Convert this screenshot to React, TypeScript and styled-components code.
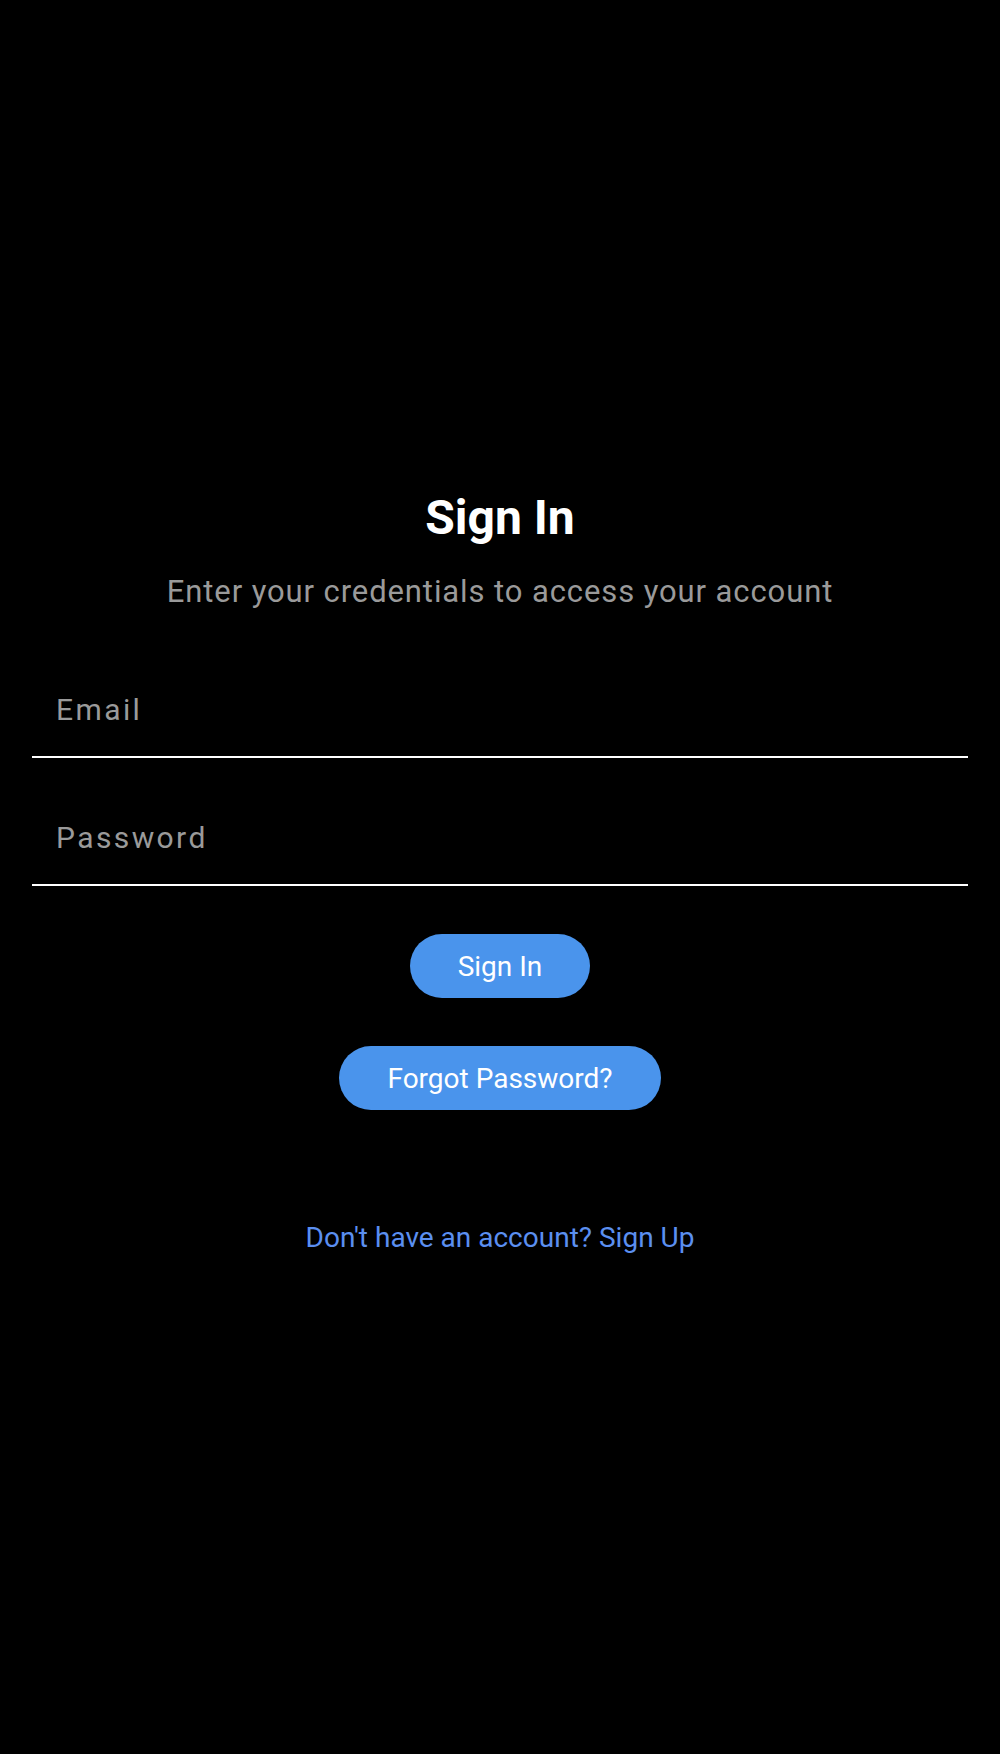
import React from "react";
import styled, { createGlobalStyle } from "styled-components";

const GlobalStyle = createGlobalStyle`
  html, body {
    margin: 0;
    padding: 0;
    background: #000;
  }
  body {
    font-family: Roboto, "Noto Sans", "Liberation Sans", sans-serif;
    color: #fff;
  }
  * { box-sizing: border-box; }
`;

const Screen = styled.main`
  min-height: 100vh;
  display: flex;
  flex-direction: column;
  justify-content: center;
  align-items: stretch;
  padding: 0 32px;
  background: #000;
`;

const Title = styled.h1`
  margin: 0;
  font-size: 48px;
  font-weight: 700;
  line-height: 56px;
  text-align: center;
  color: #fff;
`;

const Subtitle = styled.p`
  margin: 28px 0 0;
  font-size: 31px;
  line-height: 36px;
  letter-spacing: 0.9px;
  text-align: center;
  color: #9a9a9a;
`;

const Form = styled.form`
  display: flex;
  flex-direction: column;
  align-items: center;
  margin-top: 52px;
`;

const Field = styled.input<{ $gap?: number }>`
  width: 100%;
  height: 96px;
  margin: ${(p) => p.$gap ?? 0}px 0 0;
  padding: 0 24px;
  background: transparent;
  border: none;
  border-bottom: 2px solid #fff;
  border-radius: 0;
  outline: none;
  font-family: inherit;
  font-size: 30px;
  letter-spacing: 2.4px;
  color: #fff;

  &::placeholder {
    color: #9a9a9a;
    opacity: 1;
  }
`;

const PillButton = styled.button<{ $gap: number }>`
  margin-top: ${(p) => p.$gap}px;
  height: 64px;
  padding: 0 48px;
  border: none;
  border-radius: 32px;
  background: #4a94ec;
  color: #fff;
  font-family: inherit;
  font-size: 28px;
  line-height: 33px;
  cursor: pointer;
`;

const LinkButton = styled.button`
  margin-top: 101px;
  padding: 10px 12px;
  background: transparent;
  border: none;
  color: #5b8ff0;
  font-family: inherit;
  font-size: 28px;
  line-height: 33px;
  cursor: pointer;
`;

export default function App() {
  return (
    <>
      <GlobalStyle />
      <Screen>
        <Title>Sign In</Title>
        <Subtitle>Enter your credentials to access your account</Subtitle>
        <Form onSubmit={(e) => e.preventDefault()}>
          <Field type="email" placeholder="Email" />
          <Field type="password" placeholder="Password" $gap={32} />
          <PillButton type="submit" $gap={48}>Sign In</PillButton>
          <PillButton type="button" $gap={48}>Forgot Password?</PillButton>
          <LinkButton type="button">Don't have an account? Sign Up</LinkButton>
        </Form>
      </Screen>
    </>
  );
}
